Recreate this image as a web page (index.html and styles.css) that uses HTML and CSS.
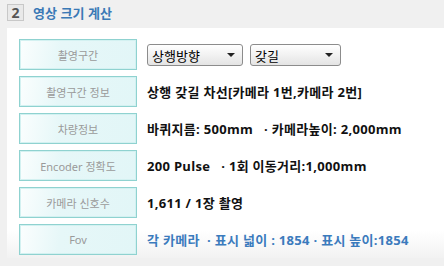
FILE: index.html
```html
<!DOCTYPE html>
<html lang="ko">
<head>
<meta charset="utf-8">
<link rel="stylesheet" href="styles.css">
</head>
<body>
<div class="header">
  <span class="num">2</span>
  <span class="title">영상 크기 계산</span>
</div>
<div class="panel">
  <div class="row">
    <div class="label">촬영구간</div>
    <div class="value selects">
      <div class="select s1"><span>상행방향</span><i class="arrow"></i></div>
      <div class="select s2"><span>갖길</span><i class="arrow"></i></div>
    </div>
  </div>
  <div class="row">
    <div class="label">촬영구간 정보</div>
    <div class="value">상행 갖길 차선[카메라 1번,카메라 2번]</div>
  </div>
  <div class="row">
    <div class="label">차량정보</div>
    <div class="value">바퀴지름: 500mm &nbsp;&nbsp;· 카메라높이: 2,000mm</div>
  </div>
  <div class="row">
    <div class="label">Encoder 정확도</div>
    <div class="value">200 Pulse &nbsp;&nbsp;· 1회 이동거리:1,000mm</div>
  </div>
  <div class="row">
    <div class="label">카메라 신호수</div>
    <div class="value">1,611 / 1장 촬영</div>
  </div>
  <div class="row">
    <div class="label">Fov</div>
    <div class="value blue">각 카메라 &nbsp;· 표시 넓이 : 1854 · 표시 높이:1854</div>
  </div>
</div>
</body>
</html>
```
FILE: styles.css
```css
html, body {
  margin: 0;
  padding: 0;
}
body {
  width: 444px;
  height: 266px;
  overflow: hidden;
  background: #f0f0f0;
  font-family: "Noto Sans", "Noto Sans CJK KR", sans-serif;
}
.header {
  height: 28px;
  display: flex;
  align-items: center;
  padding-left: 7px;
  gap: 9px;
  box-sizing: border-box;
  padding-bottom: 3px;
}
.num {
  width: 17px;
  height: 17px;
  box-sizing: border-box;
  border: 1px solid #c8c8c8;
  background: #e9e9e9;
  color: #555;
  font-weight: bold;
  font-size: 14px;
  line-height: 15px;
  text-align: center;
}
.title {
  color: #3a79b6;
  font-weight: bold;
  font-size: 13px;
  line-height: 16px;
  font-family: "Noto Sans CJK KR", sans-serif;
}
.panel {
  margin-left: 7px;
  height: 230px;
  box-sizing: border-box;
  padding: 11px 0 0 12px;
  background: linear-gradient(#ffffff 88%, #f2f2f2);
  display: flex;
  flex-direction: column;
  gap: 6px;
}
.row {
  display: flex;
  align-items: center;
  height: 31px;
  gap: 10px;
}
.label {
  width: 118px;
  height: 31px;
  box-sizing: border-box;
  border: 1px solid #8fd2d0;
  box-shadow: inset 0 0 0 1px #d3f1f1;
  background: linear-gradient(100deg, #fbfefe 0%, #e6f7f8 35%, #e2f6f7 100%);
  color: #9a9a9a;
  font-size: 11px;
  display: flex;
  align-items: center;
  justify-content: center;
  flex-shrink: 0;
}
.value {
  font-size: 13px;
  font-weight: bold;
  color: #111;
  white-space: nowrap;
  letter-spacing: 0.3px;
  font-family: "Open Sans", "Noto Sans CJK KR", sans-serif;
}
.value.blue {
  color: #3b7bbd;
}
.selects {
  display: flex;
  gap: 7px;
  margin-top: 1px;
  letter-spacing: 0;
}
.select {
  height: 22px;
  box-sizing: border-box;
  border: 1px solid #8c8c8c;
  border-radius: 3px;
  background: linear-gradient(#ffffff, #e4e4e4);
  display: flex;
  align-items: center;
  justify-content: space-between;
  padding: 0 7px 0 4px;
  font-size: 13px;
  font-weight: normal;
  color: #000;
  font-family: "Noto Sans CJK KR", sans-serif;
}
.s1 { width: 96px; }
.s2 { width: 91px; }
.arrow {
  width: 0;
  height: 0;
  border-left: 4px solid transparent;
  border-right: 4px solid transparent;
  border-top: 4px solid #222;
}
```
